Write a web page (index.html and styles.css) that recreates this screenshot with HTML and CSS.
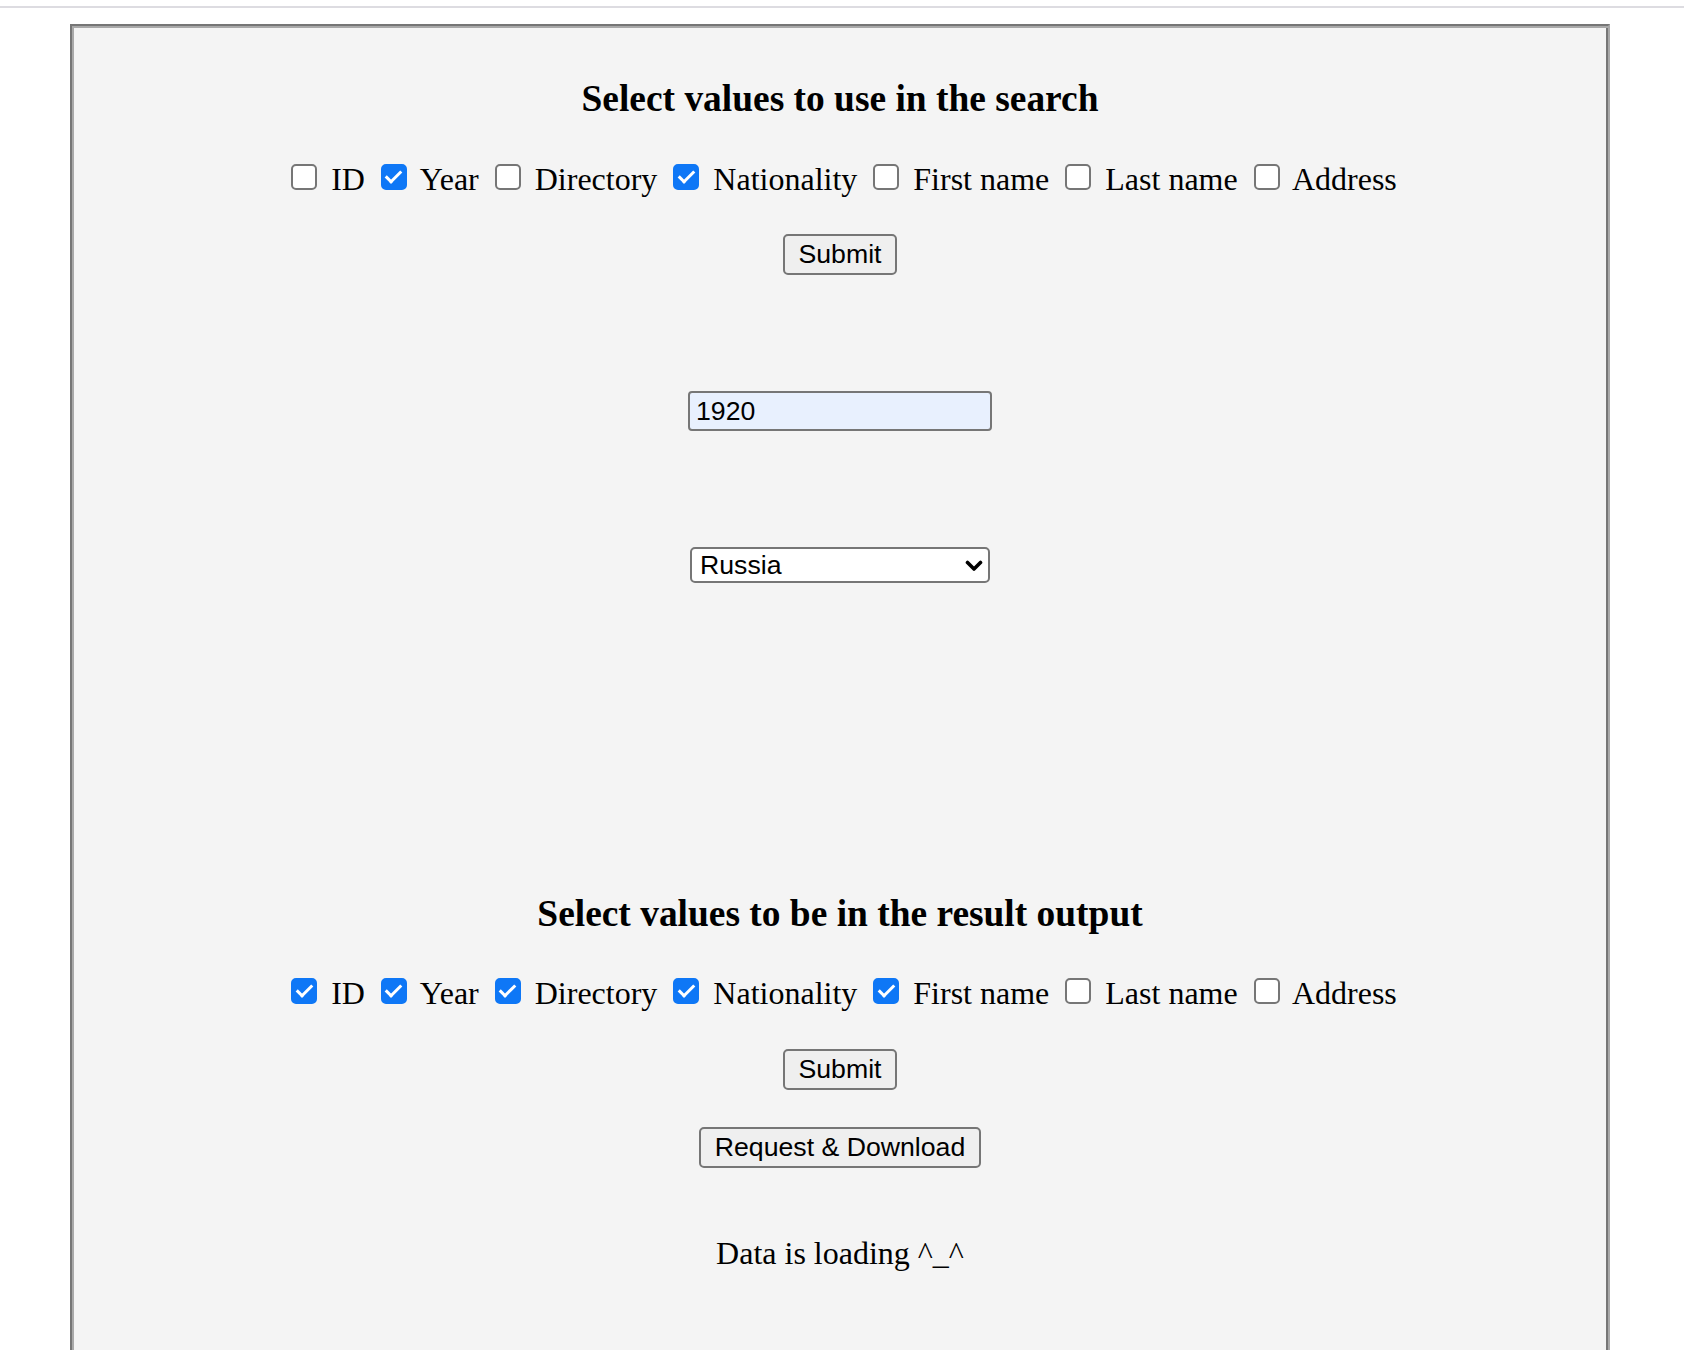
FILE: index.html
```html
<!DOCTYPE html>
<html lang="en">
<head>
<meta charset="utf-8">
<title>Search</title>
<link rel="stylesheet" href="styles.css">
</head>
<body>
<div class="topline"></div>
<main class="panel">
  <h3 class="title title-search">Select values to use in the search</h3>
  <div class="checks checks-search"><input type="checkbox" class="box"> ID <input type="checkbox" class="box" checked> Year <input type="checkbox" class="box"> Directory <input type="checkbox" class="box" checked> Nationality <input type="checkbox" class="box"> First name <input type="checkbox" class="box"> Last name <input type="checkbox" class="box"> Address</div>
  <button type="button" class="btn btn-submit-search">Submit</button>
  <input type="text" class="text-field" value="1920">
  <div class="select-wrap">
    <select class="select-field">
      <option>Russia</option>
    </select>
    <svg class="chevron" width="18" height="12" viewBox="0 0 18 12" aria-hidden="true"><polyline points="2.5,2.5 9,9 15.5,2.5" fill="none" stroke="#000" stroke-width="3.6" stroke-linecap="round" stroke-linejoin="round"/></svg>
  </div>
  <h3 class="title title-output">Select values to be in the result output</h3>
  <div class="checks checks-output"><input type="checkbox" class="box" checked> ID <input type="checkbox" class="box" checked> Year <input type="checkbox" class="box" checked> Directory <input type="checkbox" class="box" checked> Nationality <input type="checkbox" class="box" checked> First name <input type="checkbox" class="box"> Last name <input type="checkbox" class="box"> Address</div>
  <button type="button" class="btn btn-submit-output">Submit</button>
  <button type="button" class="btn btn-download">Request &amp; Download</button>
  <p class="status">Data is loading ^_^</p>
</main>
</body>
</html>
```
FILE: styles.css
```css
html, body {
  margin: 0;
  padding: 0;
  background: #ffffff;
  overflow: hidden;
}

body {
  font-family: "Liberation Serif", "Times New Roman", serif;
  color: #000;
}

.topline {
  height: 2px;
  margin-top: 6px;
  background: #dddce1;
}

.panel {
  box-sizing: border-box;
  width: 1540px;
  min-height: 1400px;
  margin: 16px 0 0 70px;
  padding: 2px;
  background: #f4f4f4;
  border: 2px solid;
  border-color: #767676 #a9a9a9 #a9a9a9 #767676;
  box-shadow: inset 2px 2px 0 #a9a9a9, inset -2px -2px 0 #767676;
  display: flex;
  flex-direction: column;
  align-items: center;
}

.title {
  margin: 0;
  font-size: 37.44px;
  line-height: 43px;
  font-weight: bold;
}

.title-search {
  margin-top: 49px;
}

.title-output {
  margin-top: 309px;
}

.checks {
  font-size: 32px;
  line-height: 37px;
  white-space: nowrap;
}

.checks-search {
  margin-top: 41px;
}

.checks-output {
  margin-top: 40px;
}

.box {
  position: relative;
  box-sizing: border-box;
  width: 26px;
  height: 26px;
  margin: 3px 6px 0 8px;
  vertical-align: top;
  appearance: none;
  -webkit-appearance: none;
  background: #ffffff;
  border: 2px solid #767676;
  border-radius: 5px;
}

.box:checked {
  background: #0e77f6;
  border-color: #0e77f6;
}

.box:checked::after {
  content: "";
  position: absolute;
  box-sizing: border-box;
  left: 6.5px;
  top: 1.2px;
  width: 9px;
  height: 16px;
  border-style: solid;
  border-color: #ffffff;
  border-width: 0 3.6px 3.6px 0;
  transform: rotate(45deg);
}

.btn {
  box-sizing: border-box;
  height: 41px;
  padding: 0 14px;
  font-family: "Liberation Sans", Arial, sans-serif;
  font-size: 26.67px;
  line-height: 37px;
  color: #000;
  background: #efefef;
  border: 2px solid #767676;
  border-radius: 5px;
}

.btn-submit-search {
  margin-top: 36px;
}

.btn-submit-output {
  margin-top: 37px;
}

.btn-download {
  margin-top: 37px;
}

.text-field {
  box-sizing: border-box;
  width: 304px;
  height: 40px;
  margin-top: 116px;
  padding: 0 6px;
  font-family: "Liberation Sans", Arial, sans-serif;
  font-size: 26.67px;
  color: #000;
  background: #e8f0fe;
  border: 2px solid #767676;
  border-radius: 4px;
}

.select-wrap {
  position: relative;
  margin-top: 116px;
  width: 300px;
  height: 36px;
}

.select-field {
  box-sizing: border-box;
  width: 300px;
  height: 36px;
  padding: 0 0 0 8px;
  font-family: "Liberation Sans", Arial, sans-serif;
  font-size: 26.67px;
  color: #000;
  background: #ffffff;
  border: 2px solid #767676;
  border-radius: 5px;
  appearance: none;
  -webkit-appearance: none;
}

.chevron {
  position: absolute;
  right: 7px;
  top: 13px;
  pointer-events: none;
}

.status {
  margin: 67px 0 0;
  font-size: 32px;
  line-height: 37px;
}
```
